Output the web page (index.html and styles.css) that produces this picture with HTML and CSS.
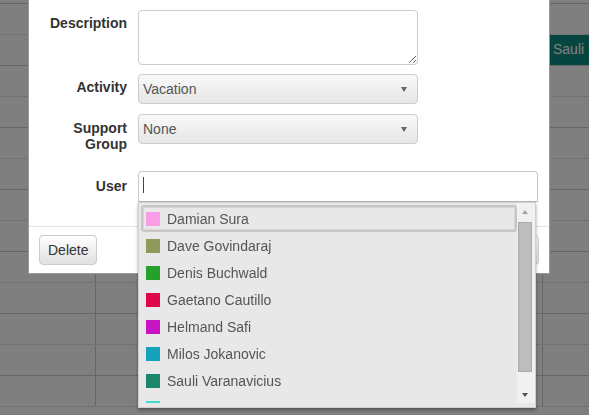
FILE: index.html
```html
<!DOCTYPE html>
<html>
<head>
<meta charset="utf-8">
<link rel="stylesheet" href="styles.css">
</head>
<body>
<div class="calendar">
  <div class="cal-row first"><div class="cell"></div><div class="cell"></div><div class="cell"></div><div class="cell"></div><div class="cell"></div></div>
  <div class="cal-row half"><div class="cell"></div><div class="cell"></div><div class="cell"></div><div class="cell"></div><div class="cell"></div></div>
  <div class="cal-row"><div class="cell"></div><div class="cell"></div><div class="cell"></div><div class="cell"></div><div class="cell"><div class="event">Sauli</div></div></div>
  <div class="cal-row half"><div class="cell"></div><div class="cell"></div><div class="cell"></div><div class="cell"></div><div class="cell"></div></div>
  <div class="cal-row"><div class="cell"></div><div class="cell"></div><div class="cell"></div><div class="cell"></div><div class="cell"></div></div>
  <div class="cal-row half"><div class="cell"></div><div class="cell"></div><div class="cell"></div><div class="cell"></div><div class="cell"></div></div>
  <div class="cal-row"><div class="cell"></div><div class="cell"></div><div class="cell"></div><div class="cell"></div><div class="cell"></div></div>
  <div class="cal-row half"><div class="cell"></div><div class="cell"></div><div class="cell"></div><div class="cell"></div><div class="cell"></div></div>
  <div class="cal-row"><div class="cell"></div><div class="cell"></div><div class="cell"></div><div class="cell"></div><div class="cell"></div></div>
  <div class="cal-row half"><div class="cell"></div><div class="cell"></div><div class="cell"></div><div class="cell"></div><div class="cell"></div></div>
  <div class="cal-row"><div class="cell"></div><div class="cell"></div><div class="cell"></div><div class="cell"></div><div class="cell"></div></div>
  <div class="cal-row half"><div class="cell"></div><div class="cell"></div><div class="cell"></div><div class="cell"></div><div class="cell"></div></div>
  <div class="cal-row"><div class="cell"></div><div class="cell"></div><div class="cell"></div><div class="cell"></div><div class="cell"></div></div>
  <div class="cal-row half"><div class="cell"></div><div class="cell"></div><div class="cell"></div><div class="cell"></div><div class="cell"></div></div>
</div>

<div class="backdrop"></div>

<div class="dialog">
  <div class="dialog-body">
    <div class="form-row row-desc">
      <label class="label">Description</label>
      <textarea class="textarea"></textarea>
    </div>
    <div class="form-row row-activity">
      <label class="label">Activity</label>
      <div class="select">Vacation</div>
    </div>
    <div class="form-row row-support">
      <label class="label">Support<br>Group</label>
      <div class="select">None</div>
    </div>
    <div class="form-row row-user">
      <label class="label">User</label>
      <div class="user-field">
        <div class="user-input"><span class="caret"></span></div>
        <div class="dropdown">
          <div class="list">
            <div class="item active"><span class="swatch" style="background:#f99de6"></span>Damian Sura</div>
            <div class="item"><span class="swatch" style="background:#8e9a5b"></span>Dave Govindaraj</div>
            <div class="item"><span class="swatch" style="background:#24a12b"></span>Denis Buchwald</div>
            <div class="item"><span class="swatch" style="background:#e00549"></span>Gaetano Cautillo</div>
            <div class="item"><span class="swatch" style="background:#c815c3"></span>Helmand Safi</div>
            <div class="item"><span class="swatch" style="background:#16a2bd"></span>Milos Jokanovic</div>
            <div class="item"><span class="swatch" style="background:#1b866c"></span>Sauli Varanavicius</div>
            <div class="item"><span class="swatch" style="background:#40dccc"></span></div>
          </div>
          <div class="scrollbar">
            <div class="sb-btn"><span class="arrow-up"></span></div>
            <div class="sb-track"><div class="sb-thumb"></div></div>
            <div class="sb-btn"><span class="arrow-down"></span></div>
          </div>
        </div>
      </div>
    </div>
  </div>
  <div class="dialog-footer">
    <button class="btn">Delete</button>
    <button class="btn">Save</button>
  </div>
</div>
</body>
</html>
```

FILE: styles.css
```css
* { box-sizing: border-box; }
html, body { margin: 0; height: 100%; }
body {
  font-family: "Liberation Sans", Arial, sans-serif;
  font-size: 14px;
  color: #333;
  background: #fff;
  overflow: hidden;
  position: relative;
}

/* calendar behind the modal */
.calendar { display: flex; flex-direction: column; }
.cal-row {
  flex: none;
  display: grid;
  grid-template-columns: 96px 149px 149px 149px 1fr;
  height: 31px;
  border-bottom: 1px solid #ccc;
}
.cal-row.first { height: 4px; }
.cal-row.half { border-bottom-style: dotted; }
.cell { border-right: 1px solid #ccc; }
.cell:last-child { border-right: 0; }
.event {
  height: 100%;
  background: #0f8a82;
  color: #fff;
  padding: 6px 0 0 10px;
  white-space: nowrap;
  overflow: hidden;
}

.backdrop {
  position: fixed;
  top: 0;
  left: 0;
  right: 0;
  bottom: 0;
  z-index: 1;
  background: rgba(0, 0, 0, 0.5);
}

/* modal */
.dialog {
  position: absolute;
  z-index: 2;
  left: 28px;
  top: -1px;
  width: 522px;
  background: #fff;
  border: 1px solid #9a9a9a;
}
.dialog-body { padding: 10px 10px 24px; }
.form-row {
  display: grid;
  grid-template-columns: 88px 1fr;
  column-gap: 11px;
  align-items: start;
  margin-bottom: 10px;
}
.row-desc { margin-bottom: 9px; }
.row-support { margin-bottom: 19px; }
.row-user { margin-bottom: 0; }
.label {
  text-align: right;
  font-weight: bold;
  line-height: 16px;
  padding-top: 6px;
  color: #333;
}
.row-desc .label, .row-activity .label { padding-top: 5px; }
.row-user .label { padding-top: 7px; }
.textarea {
  display: block;
  width: 280px;
  height: 55px;
  margin: 0;
  border: 1px solid #ccc;
  border-radius: 4px;
  resize: both;
  font: inherit;
}
.select {
  position: relative;
  width: 280px;
  height: 30px;
  border: 1px solid #ccc;
  border-radius: 4px;
  background: linear-gradient(#f9f9f9, #e6e6e6);
  color: #555;
  padding-left: 4px;
  line-height: 28px;
}
.select::after {
  content: "";
  position: absolute;
  right: 10px;
  top: 12px;
  border-left: 3.5px solid transparent;
  border-right: 3.5px solid transparent;
  border-top: 5px solid #666;
}

.user-field { position: relative; }
.user-input {
  width: 400px;
  height: 31px;
  border: 1px solid #c8c8c8;
  border-bottom-color: #b8b4b4;
  border-radius: 4px 4px 0 0;
  background: #fff;
  padding: 5px 0 0 4px;
}
.caret {
  display: block;
  width: 1px;
  height: 16px;
  background: #444;
}

.dropdown {
  position: absolute;
  left: 0;
  top: 100%;
  z-index: 3;
  width: 398px;
  height: 206px;
  display: flex;
  background: #e8e8e8;
  border: 1px solid #d0d0d0;
  padding-bottom: 4px;
  box-shadow: 0 2px 3px rgba(0, 0, 0, 0.35);
}
.list {
  flex: 1;
  overflow: hidden;
  padding: 2px 0 0 2px;
}
.item {
  height: 27px;
  display: flex;
  align-items: center;
  padding-left: 3px;
  border: 2px solid transparent;
  border-radius: 3px;
  color: #555;
  white-space: nowrap;
}
.item.active {
  border-color: #c9c5c5;
  box-shadow: inset 0 0 0 1px #d8d5d5;
}
.swatch {
  flex: none;
  width: 14px;
  height: 14px;
  margin-right: 7px;
}

.scrollbar {
  width: 18px;
  background: #f1f1f1;
  display: flex;
  flex-direction: column;
}
.sb-btn {
  height: 17px;
  display: flex;
  align-items: center;
  justify-content: center;
  padding-right: 2px;
}
.arrow-up {
  border-left: 3.5px solid transparent;
  border-right: 3.5px solid transparent;
  border-bottom: 4px solid #a3a3a3;
}
.arrow-down {
  border-left: 3.5px solid transparent;
  border-right: 3.5px solid transparent;
  border-top: 4px solid #505050;
}
.sb-track { flex: 1; padding: 2px 0 0 1px; }
.sb-thumb {
  width: 14px;
  height: 150px;
  background: #bdbdbd;
  border: 1px solid #aaa;
}

.dialog-footer {
  border-top: 1px solid #e5e5e5;
  padding: 8px 10px;
  display: flex;
  justify-content: space-between;
}
.btn {
  height: 30px;
  margin: 0;
  padding: 0 8px;
  border: 1px solid #ccc;
  border-radius: 4px;
  background: linear-gradient(#fff, #e0e0e0);
  font: inherit;
  color: #333;
}
```
